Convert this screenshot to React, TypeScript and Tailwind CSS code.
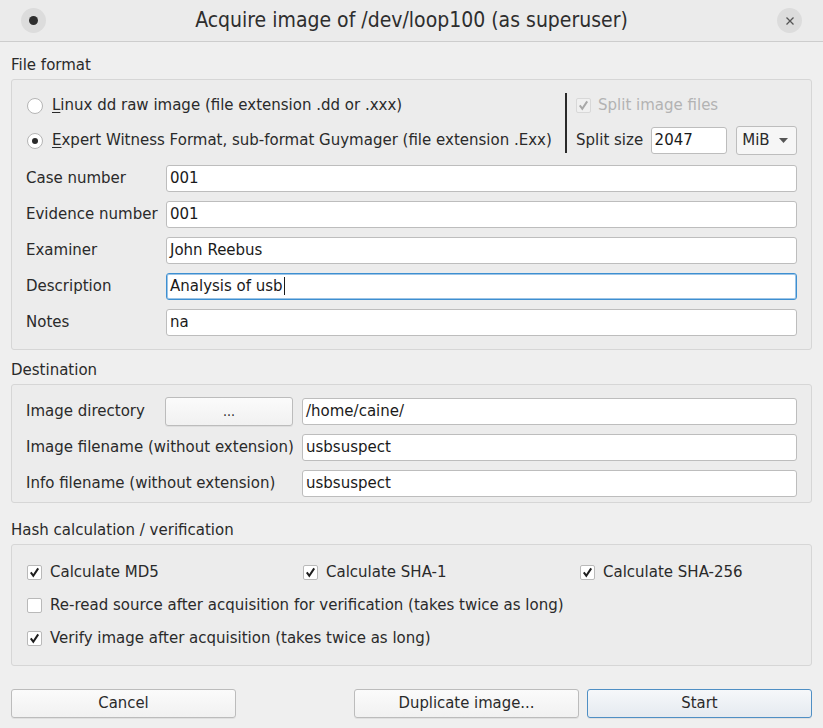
import { ReactNode } from 'react'

const FONT = { fontFamily: '"DejaVu Sans", "Liberation Sans", sans-serif' }
const NARROW = { fontFamily: '"DejaVu Sans Condensed", "DejaVu Sans", sans-serif' }

function Check({ checked = false, disabled = false }: { checked?: boolean; disabled?: boolean }) {
  return (
    <span
      className={`flex h-[15px] w-[15px] shrink-0 items-center justify-center rounded-[2px] border ${
        disabled ? 'border-[#d8d8d8] bg-[#f0f0f0]' : 'border-[#b9b9b9] bg-white'
      }`}
    >
      {checked && (
        <svg width="11" height="11" viewBox="0 0 11 11">
          <path
            d="M1.8 5.4 L4.3 8.8 L9.2 1.4"
            fill="none"
            stroke={disabled ? '#a8a8a8' : '#1e1e1e'}
            strokeWidth="2"
          />
        </svg>
      )}
    </span>
  )
}

function Radio({ checked = false }: { checked?: boolean }) {
  return (
    <span className="flex h-[16px] w-[16px] shrink-0 items-center justify-center rounded-full border border-[#b5b5b5] bg-white">
      {checked && <span className="h-[6px] w-[6px] rounded-full bg-[#2a2a2a]" />}
    </span>
  )
}

function Field({ value, focused = false, className = '' }: { value: string; focused?: boolean; className?: string }) {
  return (
    <div
      className={`flex h-[27px] items-center rounded-[3px] border bg-white pl-[3px] text-[15px] text-[#1a1a1a] ${
        focused ? 'border-[#3d8fd1] shadow-[inset_0_0_0_1px_#9cc4e6]' : 'border-[#bdbdbd]'
      } ${className}`}
    >
      {value}
      {focused && <span className="ml-[1px] h-[18px] w-[1px] bg-[#1a1a1a]" />}
    </div>
  )
}

function Group({ title, children, className = '' }: { title: string; children: ReactNode; className?: string }) {
  return (
    <div>
      <div className="pl-[11px] text-[15px] leading-[20px] text-[#2a2a2a]">{title}</div>
      <div className={`mx-[11px] mt-[4px] rounded-[3px] border border-[#d6d6d6] bg-[#ececec] ${className}`}>{children}</div>
    </div>
  )
}

function Row({ label, children }: { label: string; children: ReactNode }) {
  return (
    <div className="flex h-[36px] items-center">
      <div className="w-[140px] shrink-0 text-[15px] text-[#2a2a2a]">{label}</div>
      {children}
    </div>
  )
}

function Button({ label, primary = false, className = '' }: { label: string; primary?: boolean; className?: string }) {
  return (
    <div
      style={NARROW}
      className={`flex h-[29px] items-center justify-center rounded-[3px] border text-[16.5px] text-[#2a2a2a] shadow-[0_1px_0_rgba(0,0,0,0.06)] ${
        primary ? 'border-[#4f8fc4] bg-gradient-to-b from-[#f6f8fa] to-[#e5eaf0]' : 'border-[#bcbcbc] bg-gradient-to-b from-[#fbfbfb] to-[#f1f1f1]'
      } ${className}`}
    >
      {label}
    </div>
  )
}

export default function App() {
  return (
    <div style={FONT} className="h-[728px] w-[823px] overflow-hidden bg-[#efefef] text-[#2a2a2a]">
      {/* Title bar */}
      <div className="flex h-[42px] items-center justify-between border-b border-[#cdcdcd] bg-[#ebebeb] px-[21px]">
        <div className="flex h-[25px] w-[25px] items-center justify-center rounded-full bg-[#dcdcdc]">
          <span className="h-[9px] w-[9px] rounded-full bg-[#2e2e2e]" />
        </div>
        <div style={NARROW} className="text-[21px] font-medium text-[#2e2e2e]">
          Acquire image of /dev/loop100 (as superuser)
        </div>
        <div className="flex h-[25px] w-[25px] items-center justify-center rounded-full bg-[#dcdcdc]">
          <svg width="10" height="10" viewBox="0 0 10 10">
            <path d="M1.5 1.5 L8.5 8.5 M8.5 1.5 L1.5 8.5" stroke="#555" strokeWidth="1.3" />
          </svg>
        </div>
      </div>

      <div className="pt-[13px]">
        {/* File format */}
        <Group title="File format" className="px-[14px] pb-[9px] pt-[8px]">
          <div className="flex pb-[2px]">
            <div className="flex flex-1 flex-col">
              <div className="flex h-[35px] items-center gap-[9px] pl-[1px] text-[15px]">
                <Radio />
                <span>
                  <span className="underline underline-offset-2">L</span>inux dd raw image (file extension .dd or .xxx)
                </span>
              </div>
              <div className="flex h-[35px] items-center gap-[9px] pl-[1px] text-[15px]">
                <Radio checked />
                <span>
                  <span className="underline underline-offset-2">E</span>xpert Witness Format, sub-format Guymager (file extension .Exx)
                </span>
              </div>
            </div>
            <div className="my-[5px] w-[2px] bg-[#2a2a2a]" />
            <div className="flex w-[230px] flex-col pl-[9px]">
              <div className="flex h-[35px] items-center gap-[7px] text-[15px] text-[#b3b3b3]">
                <Check checked disabled />
                <span>Split image files</span>
              </div>
              <div className="flex h-[35px] items-center text-[15px]">
                <span className="w-[75px]">Split size</span>
                <Field value="2047" className="w-[77px]" />
                <div className="ml-[9px] flex h-[29px] w-[61px] items-center justify-between rounded-[3px] border border-[#bdbdbd] bg-[#f6f6f6] pl-[5px] pr-[8px]">
                  <span>MiB</span>
                  <svg width="9" height="5" viewBox="0 0 9 5">
                    <path d="M0 0 L9 0 L4.5 5 Z" fill="#555" />
                  </svg>
                </div>
              </div>
            </div>
          </div>
          <Row label="Case number">
            <Field value="001" className="flex-1" />
          </Row>
          <Row label="Evidence number">
            <Field value="001" className="flex-1" />
          </Row>
          <Row label="Examiner">
            <Field value="John Reebus" className="flex-1" />
          </Row>
          <Row label="Description">
            <Field value="Analysis of usb" focused className="flex-1" />
          </Row>
          <Row label="Notes">
            <Field value="na" className="flex-1" />
          </Row>
        </Group>

        {/* Destination */}
        <div className="mt-[10px]">
          <Group title="Destination" className="px-[14px] pb-[1px] pt-[8px]">
            <div className="flex h-[36px] items-center">
              <div className="w-[139px] shrink-0 text-[15px]">Image directory</div>
              <Button label="..." className="w-[128px] !text-[14px]" />
              <Field value="/home/caine/" className="ml-[9px] flex-1" />
            </div>
            <div className="flex h-[36px] items-center">
              <div className="w-[276px] shrink-0 text-[15px]">Image filename (without extension)</div>
              <Field value="usbsuspect" className="flex-1" />
            </div>
            <div className="flex h-[36px] items-center">
              <div className="w-[276px] shrink-0 text-[15px]">Info filename (without extension)</div>
              <Field value="usbsuspect" className="flex-1" />
            </div>
          </Group>
        </div>

        {/* Hash */}
        <div className="mt-[17px]">
          <Group title="Hash calculation / verification" className="px-[15px] pb-[10px] pt-[11px]">
            <div className="flex h-[33px] items-center text-[15px]">
              <div className="flex w-[276px] items-center gap-[8px]">
                <Check checked />
                <span>Calculate MD5</span>
              </div>
              <div className="flex w-[277px] items-center gap-[8px]">
                <Check checked />
                <span>Calculate SHA-1</span>
              </div>
              <div className="flex items-center gap-[8px]">
                <Check checked />
                <span>Calculate SHA-256</span>
              </div>
            </div>
            <div className="flex h-[33px] items-center gap-[8px] text-[15px]">
              <Check />
              <span>Re-read source after acquisition for verification (takes twice as long)</span>
            </div>
            <div className="flex h-[33px] items-center gap-[8px] text-[15px]">
              <Check checked />
              <span>Verify image after acquisition (takes twice as long)</span>
            </div>
          </Group>
        </div>

        {/* Buttons */}
        <div className="mt-[23px] flex px-[11px]">
          <Button label="Cancel" className="w-[225px]" />
          <div className="flex-1" />
          <Button label="Duplicate image..." className="w-[225px]" />
          <Button label="Start" primary className="ml-[8px] w-[225px]" />
        </div>
      </div>
    </div>
  )
}
